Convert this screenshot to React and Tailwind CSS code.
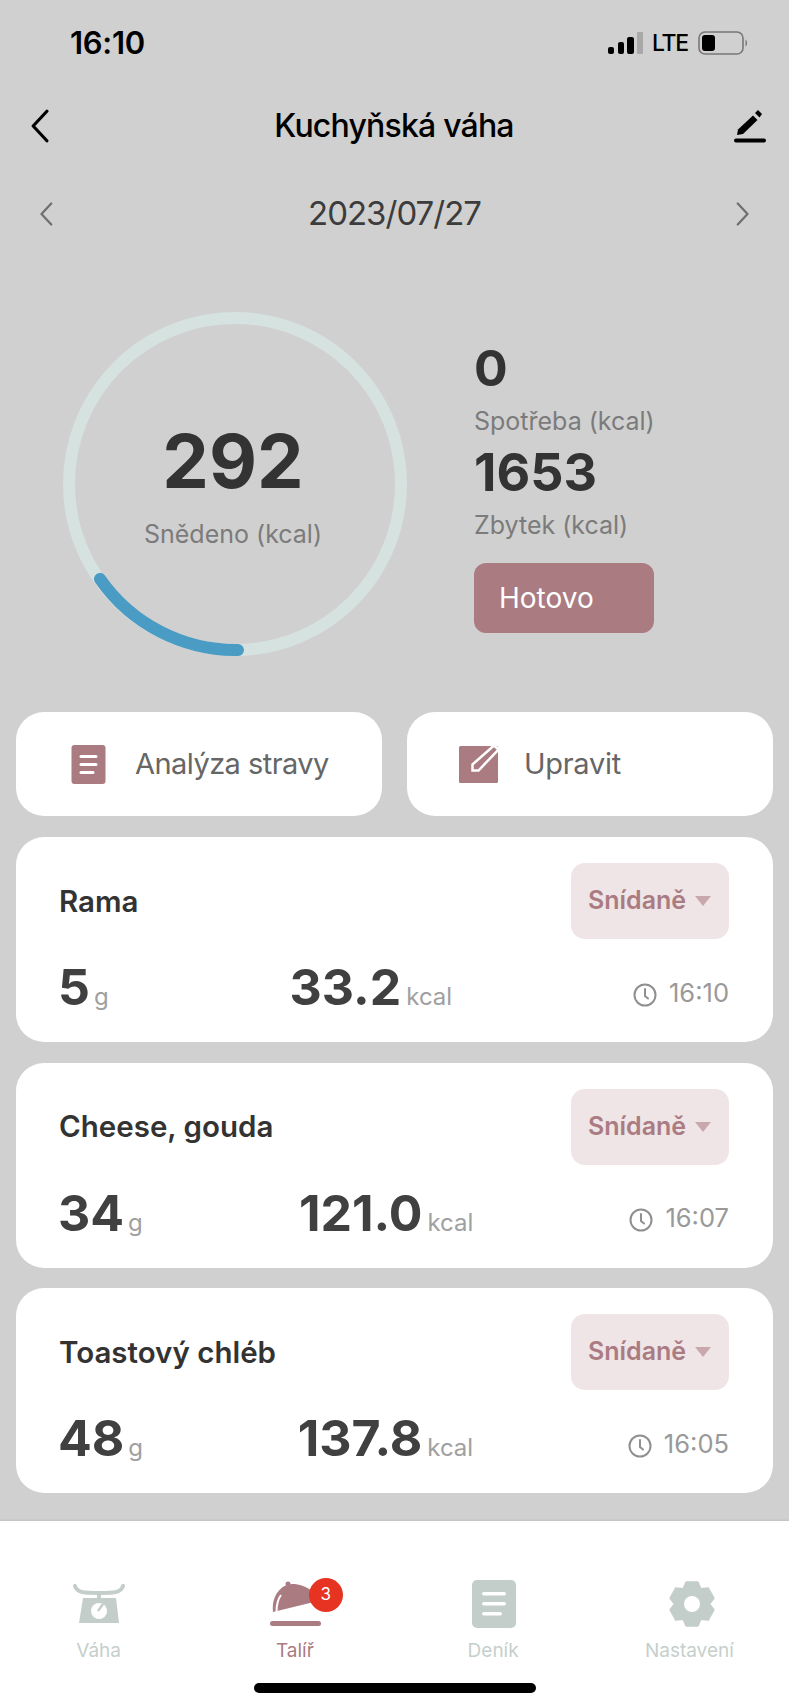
import React from "react";

const meals = [
  { name: "Rama", grams: "5", kcal: "33.2", time: "16:10" },
  { name: "Cheese, gouda", grams: "34", kcal: "121.0", time: "16:07" },
  { name: "Toastový chléb", grams: "48", kcal: "137.8", time: "16:05" },
];

// six teeth, one pointing straight up
const gearPoints = [0, 1, 2, 3, 4, 5]
  .flatMap((i) => {
    const a = (i * Math.PI) / 3;
    return [
      [a - 0.5, 17.5],
      [a - 0.26, 22.5],
      [a + 0.26, 22.5],
      [a + 0.5, 17.5],
    ];
  })
  .map(([a, r]) => `${(23 + r * Math.sin(a)).toFixed(2)},${(24 - r * Math.cos(a)).toFixed(2)}`)
  .join(" ");

const Chevron = ({ dir, className }) => (
  <svg viewBox="0 0 18 32" fill="none" className={className}>
    <path
      d={dir === "left" ? "M16 2 L3 16 L16 30" : "M2 2 L15 16 L2 30"}
      stroke="currentColor"
      strokeWidth="3"
      strokeLinecap="round"
      strokeLinejoin="round"
    />
  </svg>
);

const StatusBar = () => (
  <div className="h-[86px] flex items-start justify-between pl-[70px] pr-[41px] pt-[24px]">
    <span className="text-[31px] leading-[38px] font-semibold text-black tracking-[-0.3px]">16:10</span>
    <div className="flex items-center pt-[7px]">
      <svg viewBox="0 0 35 22" className="w-[35px] h-[22px]">
        <rect x="0" y="15" width="6" height="7" rx="2" fill="#000" />
        <rect x="10" y="10" width="6" height="12" rx="2" fill="#000" />
        <rect x="19" y="5" width="7" height="17" rx="2" fill="#000" />
        <rect x="29" y="0" width="6" height="22" rx="1" fill="#a8a8a8" />
      </svg>
      <span className="ml-[9px] w-[35px] text-[23px] leading-[24px] font-medium text-black tracking-[-1.3px]">LTE</span>
      <svg viewBox="0 0 50 24" className="ml-[11px] w-[50px] h-[24px]">
        <rect x="1" y="1" width="44" height="22" rx="6" fill="none" stroke="#777" strokeWidth="1.6" />
        <rect x="4" y="4" width="13" height="16" rx="3" fill="#000" />
        <path d="M47.5 8.5 C49.5 9.5 49.5 14.5 47.5 15.5 Z" fill="#777" />
      </svg>
    </div>
  </div>
);

const Header = () => (
  <div className="h-[80px] flex items-center justify-between pl-[30px] pr-[22px]">
    <Chevron dir="left" className="w-[19px] h-[34px] text-black" />
    <h1 className="ml-[6px] text-[32px] font-medium text-black tracking-[-0.8px]">Kuchyňská váha</h1>
    <svg viewBox="0 0 34 34" className="w-[34px] h-[34px]">
      <path d="M4 26 L5 20.5 L20 6.5 L24.5 11 L10 25 Z" fill="#000" />
      <path d="M22 4 L25 1 L29 5 L26.5 8.5 Z" fill="#000" />
      <rect x="1" y="29.5" width="32" height="4" rx="2" fill="#000" />
    </svg>
  </div>
);

const DateRow = () => (
  <div className="h-[80px] mt-[8px] flex items-center justify-between pl-[39px] pr-[39px]">
    <Chevron dir="left" className="w-[14px] h-[24px] text-[#6f6f6f]" />
    <span className="text-[33px] text-[#3c3c3c] tracking-[-1px]">2023/07/27</span>
    <Chevron dir="right" className="w-[14px] h-[24px] text-[#6f6f6f]" />
  </div>
);

const Summary = () => (
  <div className="flex items-start pl-[63px] mt-[58px]">
    <div className="grid w-[344px] h-[344px] shrink-0">
      <svg viewBox="0 0 344 344" className="col-start-1 row-start-1 w-[344px] h-[344px]">
        <circle cx="172" cy="172" r="166" fill="none" stroke="#d6e2df" strokeWidth="12" />
        <path
          d="M 175 338 A 166 166 0 0 1 37 267"
          fill="none"
          stroke="#4a9cc4"
          strokeWidth="12"
          strokeLinecap="round"
        />
      </svg>
      <div className="col-start-1 row-start-1 flex flex-col items-center pt-[106px] pr-[4px]">
        <span className="text-[74px] leading-[86px] font-bold text-[#333]">292</span>
        <span className="text-[25px] leading-[32px] mt-[14px] text-[#7b7b7b]">Snědeno (kcal)</span>
      </div>
    </div>
    <div className="flex flex-col items-start ml-[67px] pt-[28px]">
      <span className="text-[50px] leading-[56px] font-bold text-[#333]">0</span>
      <span className="text-[25px] leading-[32px] mt-[9px] text-[#7b7b7b]">Spotřeba (kcal)</span>
      <span className="text-[52px] leading-[56px] mt-[8px] font-bold text-[#333]">1653</span>
      <span className="text-[25px] leading-[32px] mt-[8px] text-[#7b7b7b]">Zbytek (kcal)</span>
      <button className="w-[180px] h-[70px] mt-[22px] rounded-[12px] bg-[#ab7b82] text-left pl-[25px] text-[28px] text-white">
        Hotovo
      </button>
    </div>
  </div>
);

const ActionButtons = () => (
  <div className="grid grid-cols-2 gap-[25px] px-[16px] mt-[56px]">
    <div className="h-[104px] bg-white rounded-[28px] flex items-center pl-[55px]">
      <svg viewBox="0 0 34 39" className="w-[35px] h-[39px]">
        <rect width="34" height="39" rx="3" fill="#ab7b82" />
        <rect x="8" y="10" width="18" height="3" rx="1.5" fill="#fff" />
        <rect x="8" y="18" width="18" height="3" rx="1.5" fill="#fff" />
        <rect x="8" y="26" width="15" height="3" rx="1.5" fill="#fff" />
      </svg>
      <span className="ml-[29px] text-[29px] text-[#666] tracking-[-0.55px]">Analýza stravy</span>
    </div>
    <div className="h-[104px] bg-white rounded-[28px] flex items-center pl-[51px]">
      <svg viewBox="0 0 43 40" className="w-[43px] h-[40px]">
        <rect x="1" y="2" width="39" height="37" rx="1.5" fill="#ab7b82" />
        <path d="M14.5 20.5 L36 1.5 L40.5 5.5 L20.5 26.5 L14.5 26.5 Z" fill="#ab7b82" stroke="#fff" strokeWidth="2.5" />
      </svg>
      <span className="ml-[23px] text-[29px] text-[#666] tracking-[-0.3px]">Upravit</span>
    </div>
  </div>
);

const MealCard = ({ meal }) => (
  <div className="h-[205px] bg-white rounded-[28px] pl-[43px] pr-[44px] pt-[26px]">
    <div className="flex items-center justify-between h-[76px]">
      <span className="text-[29.5px] font-semibold text-[#333]">{meal.name}</span>
      <div className="w-[158px] h-[76px] rounded-[14px] bg-[#efe5e7] flex items-center pl-[17px]">
        <span className="text-[25px] font-semibold text-[#ab7b82]">Snídaně</span>
        <svg viewBox="0 0 16 10" className="w-[16px] h-[10px] ml-[9px]">
          <path d="M0 0 H16 L8 10 Z" fill="#c9a8ad" />
        </svg>
      </div>
    </div>
    <div className="flex items-end justify-between mt-[19px]">
      <div className="flex items-baseline gap-[4px] -ml-px">
        <span className="text-[50px] leading-[58px] font-bold text-[#404040]">{meal.grams}</span>
        <span className="text-[24px] text-[#a0a0a0]">g</span>
      </div>
      <div className="flex items-baseline gap-[5px]">
        <span className="text-[50px] leading-[58px] font-bold text-[#404040]">{meal.kcal}</span>
        <span className="text-[24px] text-[#a0a0a0]">kcal</span>
      </div>
      <div className="flex items-center gap-[12px] pb-[4px]">
        <svg viewBox="0 0 24 24" fill="none" className="w-[24px] h-[24px] mt-[4px]">
          <circle cx="12" cy="12" r="10.5" stroke="#8f8f8f" strokeWidth="2" />
          <path d="M12 6 V13 L15 15.5" stroke="#8f8f8f" strokeWidth="2" strokeLinecap="round" />
        </svg>
        <span className="text-[25.5px] text-[#999]">{meal.time}</span>
      </div>
    </div>
  </div>
);

const ScaleIcon = () => (
  <svg viewBox="0 0 52 40" className="w-[52px] h-[40px]">
    <path d="M2 2 C4 9 12 9 26 9 C40 9 48 9 50 2" fill="none" stroke="#c3cecb" strokeWidth="4" strokeLinecap="round" />
    <rect x="24" y="9" width="4" height="6" fill="#c3cecb" />
    <path d="M10 14 H43 L46 39 H6 Z" fill="#c3cecb" />
    <circle cx="26" cy="27" r="8" fill="#fff" />
    <path d="M25 27 L30 20" stroke="#c3cecb" strokeWidth="2.5" />
  </svg>
);

const ClocheIcon = () => (
  <svg viewBox="0 0 52 46" className="w-[52px] h-[46px]">
    <circle cx="18" cy="3" r="2.5" fill="#ab7b82" />
    <path d="M3 31 C1 14 12 3 22 3 C34 3 46 10 48 20 Z" fill="#ab7b82" />
    <path d="M6.5 31 C6.5 24 8 18 11 14" fill="none" stroke="#fff" strokeWidth="2" />
    <rect x="0" y="40" width="51" height="5" rx="2.5" fill="#ab7b82" />
  </svg>
);

const DocIcon = () => (
  <svg viewBox="0 0 44 48" className="w-[44px] h-[48px]">
    <rect width="44" height="48" rx="5" fill="#c3cecb" />
    <rect x="10" y="12" width="24" height="3.5" rx="1.7" fill="#fff" />
    <rect x="10" y="22" width="24" height="3.5" rx="1.7" fill="#fff" />
    <rect x="10" y="32" width="20" height="3.5" rx="1.7" fill="#fff" />
  </svg>
);

const GearIcon = () => (
  <svg viewBox="0 0 46 48" className="w-[46px] h-[48px]">
    <polygon points={gearPoints} fill="#c3cecb" stroke="#c3cecb" strokeWidth="2" strokeLinejoin="round" />
    <circle cx="23" cy="24" r="8" fill="#fff" />
  </svg>
);

const TabBar = () => (
  <div className="flex-1 bg-white shadow-[0_-1px_2px_rgba(0,0,0,0.08)] flex flex-col">
    <div className="grid grid-cols-4 pt-[58px] h-[162px]">
      <div className="flex flex-col items-center">
        <div className="h-[50px] flex items-center"><ScaleIcon /></div>
        <span className="mt-[8px] text-[19px] text-[#c5cfcc]">Váha</span>
      </div>
      <div className="flex flex-col items-center pr-[2px]">
        <div className="relative h-[50px] flex items-center ml-[2px]">
          <ClocheIcon />
          <span className="absolute left-[39px] top-[-1px] w-[34px] h-[34px] rounded-full bg-[#e63322] text-white text-[17px] flex items-center justify-center">
            3
          </span>
        </div>
        <span className="mt-[8px] text-[19px] text-[#ab7b82]">Talíř</span>
      </div>
      <div className="flex flex-col items-center">
        <div className="h-[50px] flex items-center ml-[1px]"><DocIcon /></div>
        <span className="mt-[8px] text-[19px] text-[#c5cfcc]">Deník</span>
      </div>
      <div className="flex flex-col items-center pr-[2px]">
        <div className="h-[50px] flex items-center ml-[5px]"><GearIcon /></div>
        <span className="mt-[8px] text-[19px] text-[#c5cfcc]">Nastavení</span>
      </div>
    </div>
    <div className="w-[282px] h-[10px] mx-auto rounded-full bg-black" />
  </div>
);

const App = () => {
  return (
    <div className="w-[789px] h-[1707px] bg-[#d0d0d0] flex flex-col overflow-hidden font-['Inter',sans-serif]">
      <StatusBar />
      <Header />
      <DateRow />
      <Summary />
      <ActionButtons />
      <div className="flex flex-col gap-[20.5px] px-[16px] mt-[21px]">
        {meals.map((meal) => (
          <MealCard key={meal.name} meal={meal} />
        ))}
      </div>
      <div className="h-[28px] shrink-0" />
      <TabBar />
    </div>
  );
};

export default App;
